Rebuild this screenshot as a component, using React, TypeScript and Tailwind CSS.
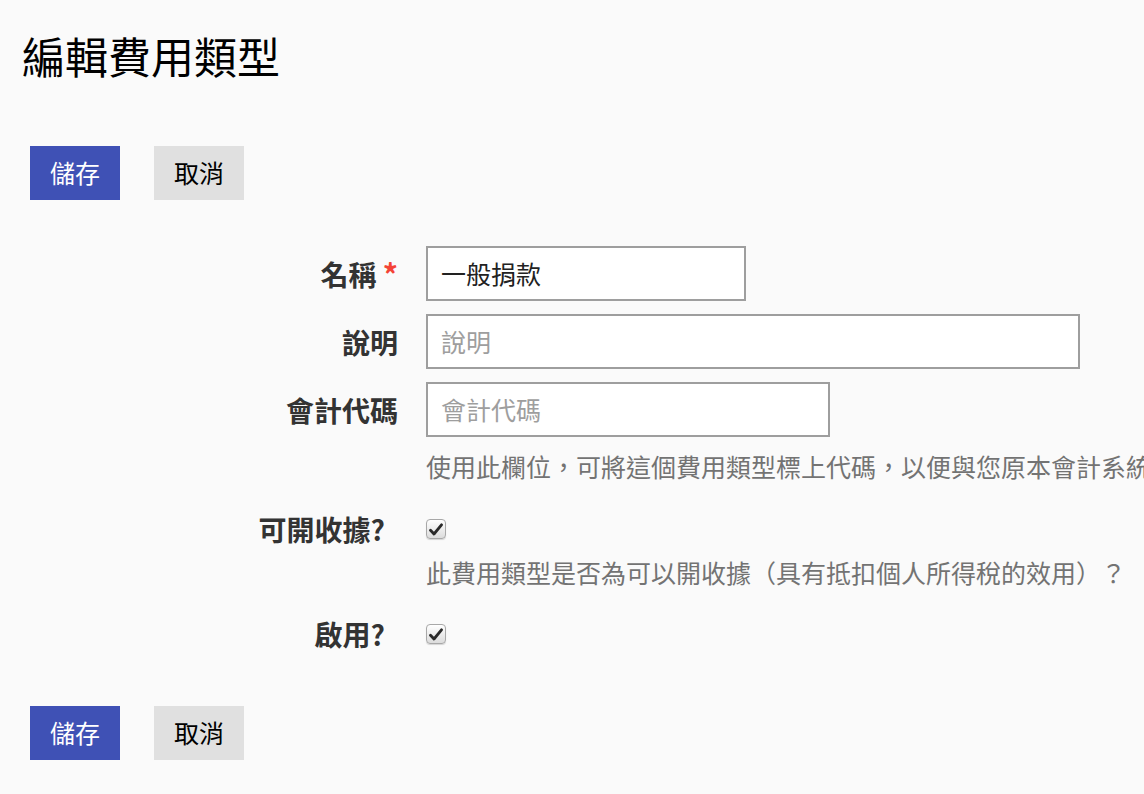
import React from "react";

const font = { fontFamily: '"Noto Sans CJK TC", "Noto Sans", sans-serif' };

function Buttons() {
  return (
    <div className="flex gap-[34px] pl-[8px]">
      <button className="h-[54px] w-[90px] bg-[#3f51b5] text-[25px] text-white">儲存</button>
      <button className="h-[54px] w-[90px] bg-[#e0e0e0] text-[25px] text-black">取消</button>
    </div>
  );
}

function Check() {
  return (
    <div className="flex h-[20px] w-[20px] items-center justify-center rounded-[4px] border border-[#a8a8a8] bg-gradient-to-b from-[#ffffff] to-[#dcdcdc] shadow-[0_1px_1px_rgba(0,0,0,0.15)]">
      <svg width="14" height="13" viewBox="0 0 14 13">
        <path d="M1.5 7.2 L5 11 L12.5 1.8" fill="none" stroke="#2a2a2a" strokeWidth="2.8" strokeLinecap="round" strokeLinejoin="round" />
      </svg>
    </div>
  );
}

function Label({ children }: { children: React.ReactNode }) {
  return (
    <div className="w-[376px] shrink-0 text-right text-[28px] font-bold leading-[34px] text-[#333]">
      {children}
    </div>
  );
}

export default function App() {
  return (
    <div className="min-h-screen w-full overflow-hidden bg-[#fafafa] pl-[22px]" style={font}>
      <h1 className="pt-[30px] text-[43px] font-normal leading-[50px] text-black">編輯費用類型</h1>
      <div className="mt-[66px]">
        <Buttons />
      </div>

      <div className="mt-[46px] flex flex-col">
        <div className="flex items-center gap-[28px]">
          <Label>
            名稱 <span className="text-[30px] text-[#f44336]">*</span>
          </Label>
          <div className="flex h-[55px] w-[320px] items-center border-2 border-[#9e9e9e] bg-white pl-[13px] text-[25px] text-[#222]">
            一般捐款
          </div>
        </div>
        <div className="mt-[13px] flex items-center gap-[28px]">
          <Label>說明</Label>
          <div className="flex h-[55px] w-[654px] items-center border-2 border-[#9e9e9e] bg-white pl-[13px] text-[25px] text-[#9e9e9e]">
            說明
          </div>
        </div>
        <div className="mt-[13px] flex items-center gap-[28px]">
          <Label>會計代碼</Label>
          <div className="flex h-[55px] w-[404px] items-center border-2 border-[#9e9e9e] bg-white pl-[13px] text-[25px] text-[#9e9e9e]">
            會計代碼
          </div>
        </div>
        <div className="mt-[12px] flex gap-[28px]">
          <div className="w-[376px] shrink-0" />
          <div className="whitespace-nowrap text-[25px] leading-[34px] text-[#737373]">
            使用此欄位，可將這個費用類型標上代碼，以便與您原本會計系統的科目代碼對應。
          </div>
        </div>
        <div className="mt-[29px] flex items-center gap-[28px]">
          <Label>
            <span className="mr-[13px]">可開收據?</span>
          </Label>
          <Check />
        </div>
        <div className="mt-[9px] flex gap-[28px]">
          <div className="w-[376px] shrink-0" />
          <div className="whitespace-nowrap text-[25px] leading-[34px] text-[#737373]">
            此費用類型是否為可以開收據（具有抵扣個人所得稅的效用）？
          </div>
        </div>
        <div className="mt-[28px] flex items-center gap-[28px]">
          <Label>
            <span className="mr-[13px]">啟用?</span>
          </Label>
          <Check />
        </div>
      </div>

      <div className="mt-[55px] pb-[34px]">
        <Buttons />
      </div>
    </div>
  );
}
